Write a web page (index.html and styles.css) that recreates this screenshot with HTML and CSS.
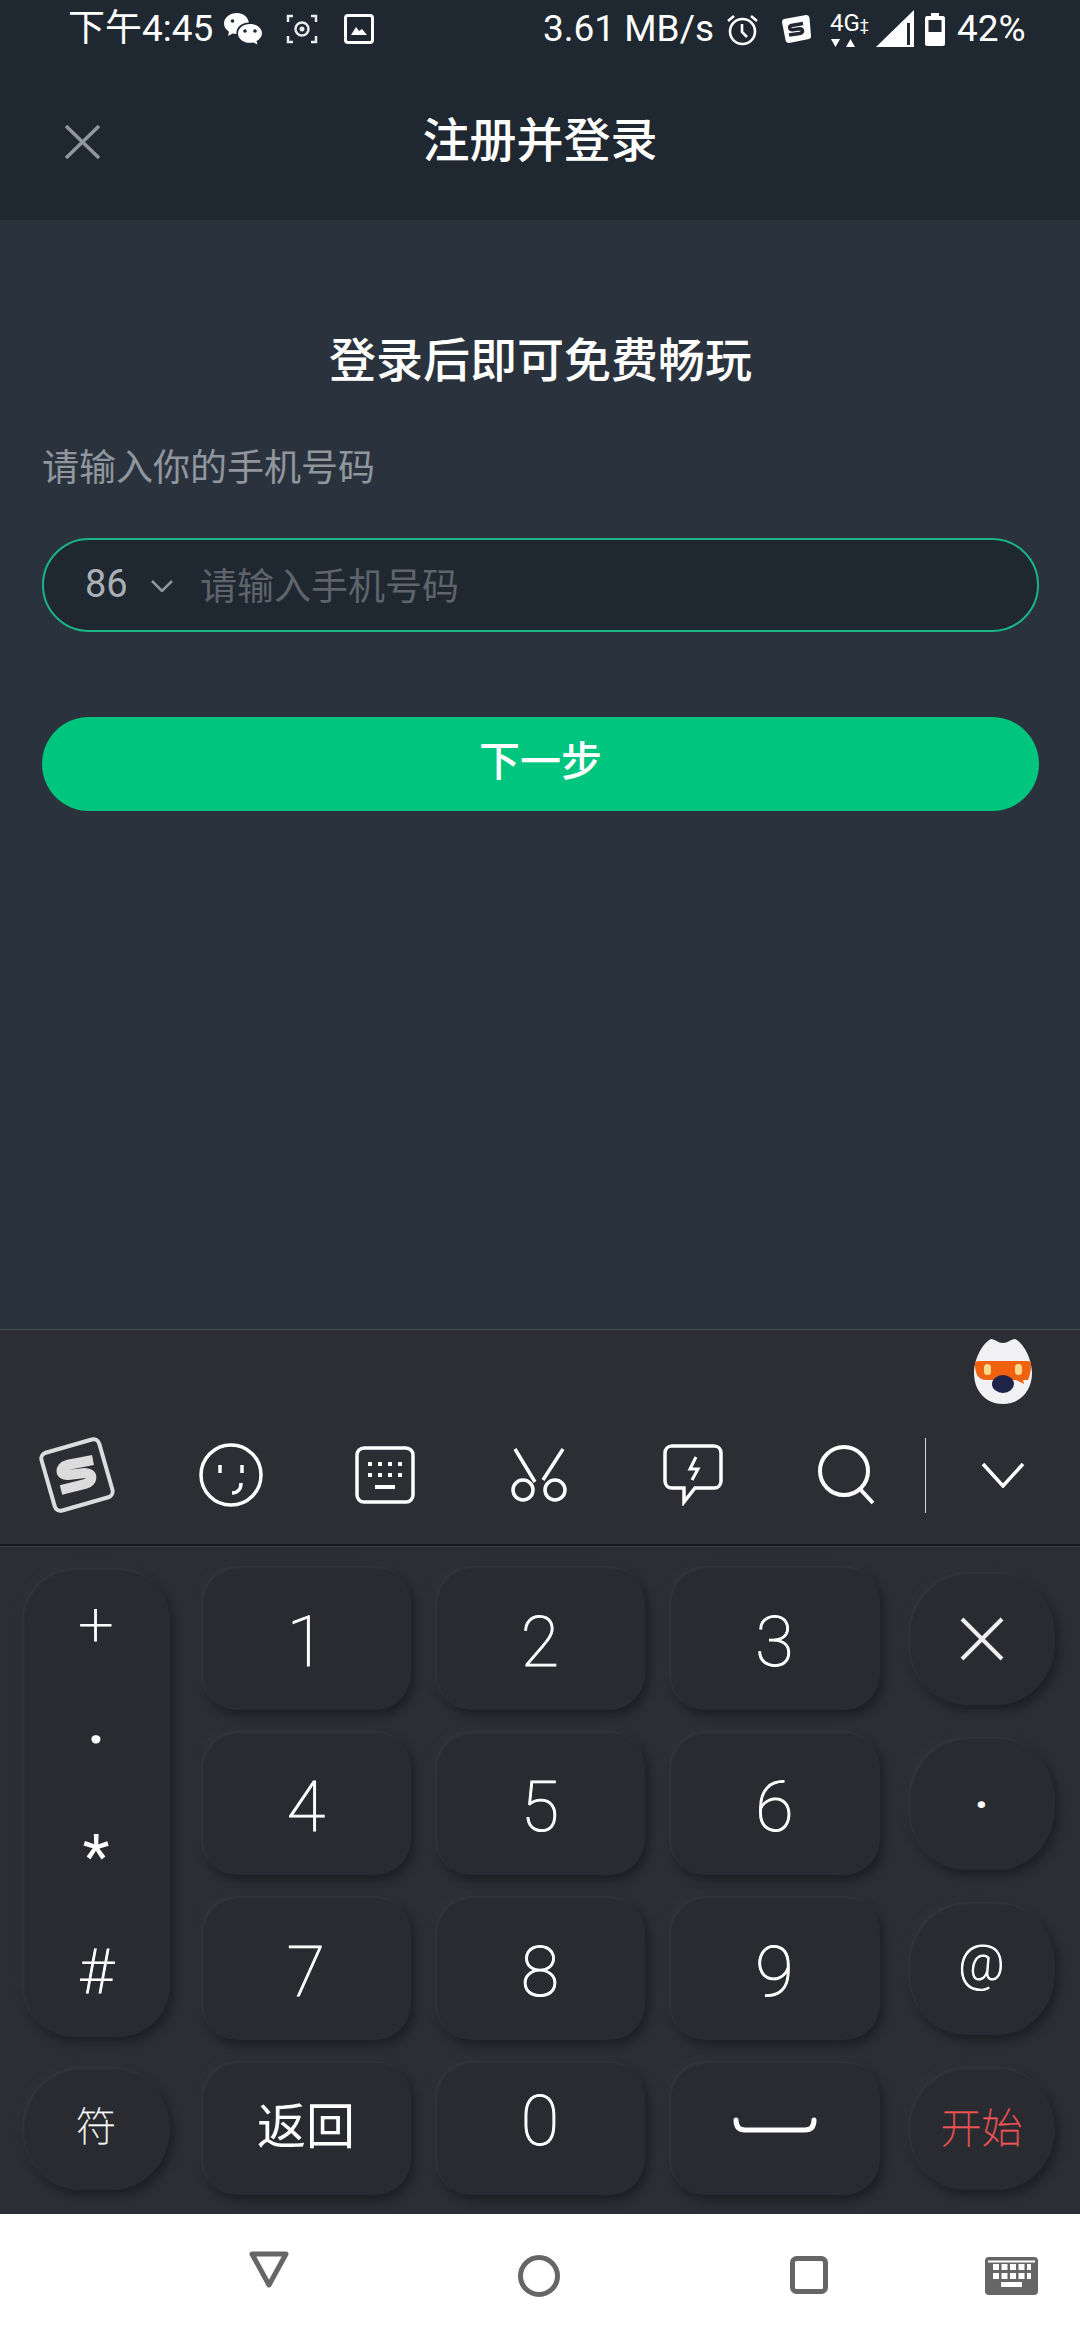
FILE: index.html
```html
<!DOCTYPE html>
<html>
<head>
    <title>注册并登录</title>
    <link rel="stylesheet" href="styles.css">
</head>
<body>
    <div class="top">
        <div class="status">
            <span class="status-time">下午4:45</span>
            <svg class="ic-wechat" width="38" height="32" viewBox="0 0 38 32"><path fill="#fff" d="M13 0C6 0 0 4.600 0 10.500c0 3.400 2 6.300 5 8.200L4 23l4.600-2.600c1.200.3 2.500.5 3.800.5-.5-6.500 5-11.500 12.400-11.500C24.200 4 19 0 13 0z"/><path fill="#fff" d="M26 11c-6.600 0-12 4.200-12 9.400s5.400 9.400 12 9.400c1.200 0 2.300-.1 3.400-.4l4 2.200-.9-3.600c3-1.700 5.500-4.500 5.500-7.600 0-5.200-5.400-9.400-12-9.400z"/><circle cx="21" cy="18" r="1.800" fill="#1f2730"/><circle cx="31" cy="18" r="1.800" fill="#1f2730"/><circle cx="8.500" cy="8" r="1.800" fill="#1f2730"/></svg>
            <svg class="ic-shot" width="32" height="30" viewBox="0 0 32 30" fill="none" stroke="#e8eaec" stroke-width="2.500"><path d="M7 2H2v6M25 2h5v6M7 28H2v-6M25 28h5v-6"/><circle cx="16" cy="15" r="6.500"/><circle cx="16" cy="15" r="2.500" fill="#e8eaec" stroke="none"/></svg>
            <svg class="ic-photo" width="30" height="30" viewBox="0 0 30 30"><rect x="1.500" y="1.500" width="27" height="27" rx="2.500" fill="none" stroke="#fff" stroke-width="3"/><path fill="#fff" d="M7 21l5-8 3 4 3-2 5 6z"/></svg>
            <span class="status-speed">3.61 MB/s</span>
            <svg class="ic-alarm" width="33" height="33" viewBox="0 0 33 33" fill="none" stroke="#fff" stroke-width="2.600"><circle cx="16.500" cy="18.500" r="12.500"/><path d="M16 11v8l5 5M2 8l6-5M31 8l-6-5"/></svg>
            <svg class="ic-sogou" width="30" height="28" viewBox="0 0 30 28"><path fill="#fff" d="M3 4 25 0c2 0 3 1 3.500 3L30 21c0 1.500-.5 2.500-2 3L8 28c-2 0-3-1-3.500-3L1 7c0-1.500.5-2.500 2-3z"/><path fill="none" stroke="#1f2730" stroke-width="3.500" d="M22 8.500 10.500 10.500c-3 1-2 4.500 1 4.300l7.500-1c3.500 0 3.500 4-.5 4.700L8 20"/></svg>
            <div class="net">
                <span class="net-text">4G<span class="net-bars">‡</span></span>
                <svg width="26" height="10" viewBox="0 0 26 10"><path fill="#fff" d="M1 1h9L5.500 9zM16 9h9L20.500 1z"/></svg>
            </div>
            <svg class="ic-signal" width="38" height="37" viewBox="0 0 38 37"><path fill="#fff" d="M0 37 38 0v37z"/><rect x="31" y="13" width="3" height="22" fill="#1f2730"/></svg>
            <svg class="ic-battery" width="20" height="33" viewBox="0 0 20 33"><path fill="#fff" d="M6 0h8v3h4c1 0 2 1 2 2v26c0 1-1 2-2 2H2c-1 0-2-1-2-2V5c0-1 1-2 2-2h4z"/><rect x="3.500" y="7" width="13" height="12" fill="#1f2730"/></svg>
            <span class="status-batt">42%</span>
        </div>
        <div class="header">
            <svg class="close" width="35" height="34" viewBox="0 0 35 34" fill="none" stroke="#8f969c" stroke-width="3.500"><path d="M1 1l33 32M34 1L1 33"/></svg>
            <span class="header-title">注册并登录</span>
        </div>
    </div>

    <div class="main">
        <h2 class="main-title">登录后即可免费畅玩</h2>
        <p class="main-label">请输入你的手机号码</p>
        <div class="phone">
            <span class="phone-code">86</span>
            <svg class="phone-arrow" width="22" height="12" viewBox="0 0 22 12" fill="none" stroke="#8f969c" stroke-width="2.500"><path d="M1 1l10 10L21 1"/></svg>
            <span class="phone-hint">请输入手机号码</span>
        </div>
        <div class="next">下一步</div>
    </div>

    <div class="keyboard">
        <div class="strip">
            <div class="strip-top">
                <svg width="58" height="66" viewBox="0 0 58 66">
                    <path fill="#f1f1f3" d="M17 1c4 0 7 4 12 4s8-4 12-4c10 5 17 22 17 34 0 18-12 31-29 31S0 53 0 35C0 23 7 6 17 1z"/>
                    <path fill="#f0620f" d="M1 26c0-2 1-3 4-3h48c3 0 4 1 4 3 0 7-1 11-3 16h-5l1 4-8-4H12c-7 0-11-5-11-16z"/>
                    <rect x="10" y="26" width="7" height="11" rx="3.500" fill="#fbd98c"/>
                    <rect x="41" y="26" width="7" height="11" rx="3.500" fill="#fbd98c"/>
                    <ellipse cx="29" cy="46" rx="11" ry="9" fill="#1e2348"/>
                </svg>
            </div>
            <div class="tools">
                <div class="tool">
                    <svg width="78" height="78" viewBox="0 0 78 78"><rect x="9" y="9" width="60" height="60" rx="6" transform="rotate(-16 39 39)" fill="none" stroke="#dcdcdc" stroke-width="4"/><path fill="none" stroke="#dcdcdc" stroke-width="10" d="M55 24 29 29c-8 2-7 11 1 10l17-2c9 0 8 9 0 11l-24 6"/></svg>
                </div>
                <div class="tool">
                    <svg width="64" height="64" viewBox="0 0 64 64" fill="none" stroke="#fff" stroke-width="3.500"><circle cx="32" cy="32" r="30"/><path d="M21 22v8M43 22v8M42 40c0 7-4 10-9 10"/></svg>
                </div>
                <div class="tool">
                    <svg width="60" height="58" viewBox="0 0 60 58"><rect x="2" y="2" width="56" height="54" rx="7" fill="none" stroke="#fff" stroke-width="3.500"/><path stroke="#fff" stroke-width="4" stroke-dasharray="4 6" d="M13 18h36M13 29h36"/><rect x="20" y="39" width="20" height="4" fill="#fff"/></svg>
                </div>
                <div class="tool">
                    <svg width="58" height="56" viewBox="0 0 58 56" fill="none" stroke="#fff" stroke-width="3.500"><path d="M5 2l20 33M53 2L33 33"/><circle cx="13" cy="43" r="10"/><circle cx="45" cy="43" r="10"/></svg>
                </div>
                <div class="tool">
                    <svg width="60" height="62" viewBox="0 0 60 62" fill="none" stroke="#fff" stroke-width="3.500"><path d="M9 2h42c4 0 7 3 7 7v28c0 4-3 7-7 7H32L21 58V44H9c-4 0-7-3-7-7V9c0-4 3-7 7-7z"/><path stroke-width="3" d="M33 13l-6 12h8l-6 11"/></svg>
                </div>
                <div class="tool">
                    <svg width="58" height="60" viewBox="0 0 58 60" fill="none" stroke="#fff" stroke-width="4"><circle cx="26" cy="26" r="24"/><path d="M42 44l13 14"/></svg>
                </div>
                <div class="strip-line"></div>
                <div class="tool-down">
                    <svg width="44" height="26" viewBox="0 0 44 26" fill="none" stroke="#fff" stroke-width="3.500"><path d="M2 2l20 22L42 2"/></svg>
                </div>
            </div>
        </div>

        <div class="keys">
            <div class="key key-side key-symbols">
                <span>+</span>
                <span class="sym-dot">·</span>
                <span class="sym-star">*</span>
                <span>#</span>
            </div>
            <div class="key">1</div>
            <div class="key">2</div>
            <div class="key">3</div>
            <div class="key key-round key-right">
                <svg width="44" height="44" viewBox="0 0 44 44" fill="none" stroke="#eee" stroke-width="4"><path d="M2 2l40 40M42 2L2 42"/></svg>
            </div>
            <div class="key">4</div>
            <div class="key">5</div>
            <div class="key">6</div>
            <div class="key key-round key-right key-dot">·</div>
            <div class="key">7</div>
            <div class="key">8</div>
            <div class="key">9</div>
            <div class="key key-round key-right key-at">@</div>
            <div class="key key-round key-left key-sym">符</div>
            <div class="key key-back">返回</div>
            <div class="key key-zero">0</div>
            <div class="key key-space">
                <svg width="84" height="16" viewBox="0 0 84 16" fill="none" stroke="#fff" stroke-width="5" stroke-linecap="round"><path d="M3 3c0 7 3 10 9 10h60c6 0 9-3 9-10"/></svg>
            </div>
            <div class="key key-round key-right key-go">开始</div>
        </div>
    </div>

    <div class="nav">
        <svg class="nav-back" width="40" height="37" viewBox="0 0 40 37" fill="none" stroke="#666" stroke-width="5" stroke-linejoin="round"><path d="M3 3h34L20 34z"/></svg>
        <svg class="nav-home" width="42" height="42" viewBox="0 0 42 42" fill="none" stroke="#666" stroke-width="5"><circle cx="21" cy="21" r="18.500"/></svg>
        <svg class="nav-recent" width="38" height="38" viewBox="0 0 38 38" fill="none" stroke="#666" stroke-width="5"><rect x="2.500" y="2.500" width="33" height="33" rx="4"/></svg>
        <svg class="nav-kb" width="53" height="38" viewBox="0 0 53 38"><rect width="53" height="38" rx="4" fill="#666"/><path stroke="#fff" stroke-width="6" stroke-dasharray="6 2.500" d="M8 10h38M8 19h38"/><rect x="16" y="25" width="21" height="5" fill="#fff"/><path stroke="#fff" stroke-width="2" d="M3 4.500h47"/></svg>
    </div>
</body>
</html>
```

FILE: styles.css
```css
* {
    box-sizing: border-box;
}

body {
    margin: 0;
    width: 1080px;
    height: 2340px;
    overflow: hidden;
    display: flex;
    flex-direction: column;
    background-color: #2a333d;
    font-family: 'Roboto', 'Noto Sans CJK SC', sans-serif;
}

/* status bar + title */
.top {
    height: 220px;
    background-color: #1f2730;
    color: #fff;
}

.status {
    height: 58px;
    display: flex;
    align-items: center;
    font-size: 37px;
    line-height: 58px;
}

.status-time {
    margin-left: 68px;
    width: 156px;
    white-space: nowrap;
}

.ic-shot {
    margin-left: 24px;
}

.ic-photo {
    margin-left: 26px;
}

.status-speed {
    margin-left: 169px;
    width: 183px;
    white-space: nowrap;
}

.ic-sogou {
    margin-left: 22px;
}

.net {
    margin-left: 19px;
    width: 46px;
    display: flex;
    flex-direction: column;
    align-items: flex-start;
}

.net-text {
    font-size: 24px;
    line-height: 24px;
}

.net-bars {
    font-size: 16px;
}

.ic-signal {
    margin-top: -2px;
}

.ic-battery {
    margin-left: 11px;
}

.status-batt {
    margin-left: 12px;
}

.header {
    height: 162px;
    padding-bottom: 5px;
    display: flex;
    align-items: center;
    position: relative;
    justify-content: center;
}

.close {
    position: absolute;
    left: 65px;
    top: 67px;
}

.header-title {
    font-size: 47px;
    font-weight: 500;
}

/* form */
.main {
    height: 1109px;
    padding: 111px 41px 0 42px;
}

.main-title {
    margin: 0;
    text-align: center;
    font-size: 47px;
    line-height: 60px;
    font-weight: 500;
    color: #fff;
}

.main-label {
    margin: 58px 0 49px;
    font-size: 37px;
    line-height: 40px;
    color: #90969d;
}

.phone {
    height: 94px;
    display: flex;
    align-items: center;
    padding: 0 0 3px 41px;
    background-color: #1f2730;
    border: 2px solid #19b586;
    border-radius: 47px;
    font-size: 37px;
}

.phone-code {
    width: 66px;
    font-size: 38px;
    color: #aab0b6;
}

.phone-arrow {
    margin-top: 5px;
}

.phone-hint {
    margin-left: 27px;
    color: #5d646c;
}

.next {
    margin-top: 85px;
    height: 94px;
    line-height: 91px;
    text-align: center;
    background-color: #00c57e;
    border-radius: 47px;
    color: #fff;
    font-size: 41px;
    font-weight: 500;
}

/* keyboard */
.keyboard {
    height: 885px;
    background-color: #2d2e34;
    border-top: 1px solid #4a4f55;
}

.strip {
    height: 216px;
    border-bottom: 2px solid #17181b;
}

.strip-top {
    height: 86px;
    padding: 8px 48px 0 0;
    display: flex;
    justify-content: flex-end;
}

.tools {
    height: 120px;
    display: flex;
    align-items: center;
    margin-top: -1px;
}

.tool {
    width: 154px;
    display: flex;
    justify-content: center;
}

.strip-line {
    width: 1px;
    height: 75px;
    margin-left: 1px;
    background-color: #d8d8d8;
}

.tool-down {
    flex: 1;
    display: flex;
    justify-content: center;
}

.keys {
    display: grid;
    grid-template-columns: 155px 210px 210px 211px 151px;
    grid-template-rows: 144px 144px 144px 134px;
    gap: 21px 24px;
    padding: 19px 25px 0 22px;
    border-top: 1px solid #3b3d44;
}

.key {
    display: flex;
    align-items: center;
    justify-content: center;
    padding-top: 7px;
    background-color: #2a2b31;
    border-radius: 36px;
    color: #fff;
    font-size: 70px;
    font-weight: 100;
    -webkit-text-stroke: 1px #fff;
    box-shadow: 4px 6px 10px rgba(0, 0, 0, 0.32),
        -3px -3px 7px rgba(70, 72, 84, 0.14),
        inset 2px 2px 2px rgba(70, 72, 84, 0.32);
}

.key-side {
    grid-row: span 3;
    margin: 2px 7px 3px 0;
    border-radius: 52px;
}

.key-symbols {
    flex-direction: column;
    justify-content: space-between;
    padding: 21px 0 30px;
    font-size: 62px;
    line-height: 70px;
}

.sym-dot {
    font-weight: 700;
    font-size: 50px;
}

.sym-star {
    font-weight: 400;
    -webkit-text-stroke: 0;
    padding-top: 4px;
}

.key-round {
    margin: 6px 0 5px;
    padding-top: 0;
    border-radius: 58px / 62px;
    font-size: 40px;
}

.key-right {
    margin-left: 4px;
}

.key-left {
    margin-right: 7px;
    margin-left: 0;
}

.key-dot {
    font-weight: 700;
    font-size: 46px;
    -webkit-text-stroke: 0;
}

.key-at {
    font-size: 50px;
    padding-bottom: 12px;
}

.key-sym {
    font-size: 40px;
    padding-bottom: 10px;
    -webkit-text-stroke: 0.4px #fff;
}

.key-back {
    padding: 0 0 12px;
    font-size: 49px;
    font-weight: 400;
    -webkit-text-stroke: 0;
}

.key-zero {
    padding: 0 0 14px;
}

.key-space {
    padding: 0 0 6px;
}

.key-go {
    padding-bottom: 8px;
    font-size: 41px;
    color: #f25555;
    -webkit-text-stroke: 0.4px #f25555;
}

/* nav bar */
.nav {
    flex: 1;
    background-color: #fff;
    position: relative;
    display: flex;
    align-items: flex-start;
    padding-top: 37px;
}

.nav-back {
    margin-left: 249px;
}

.nav-home {
    margin-left: 229px;
    margin-top: 4px;
}

.nav-recent {
    margin-left: 230px;
    margin-top: 5px;
}

.nav-kb {
    margin-left: 157px;
    margin-top: 6px;
}
```
